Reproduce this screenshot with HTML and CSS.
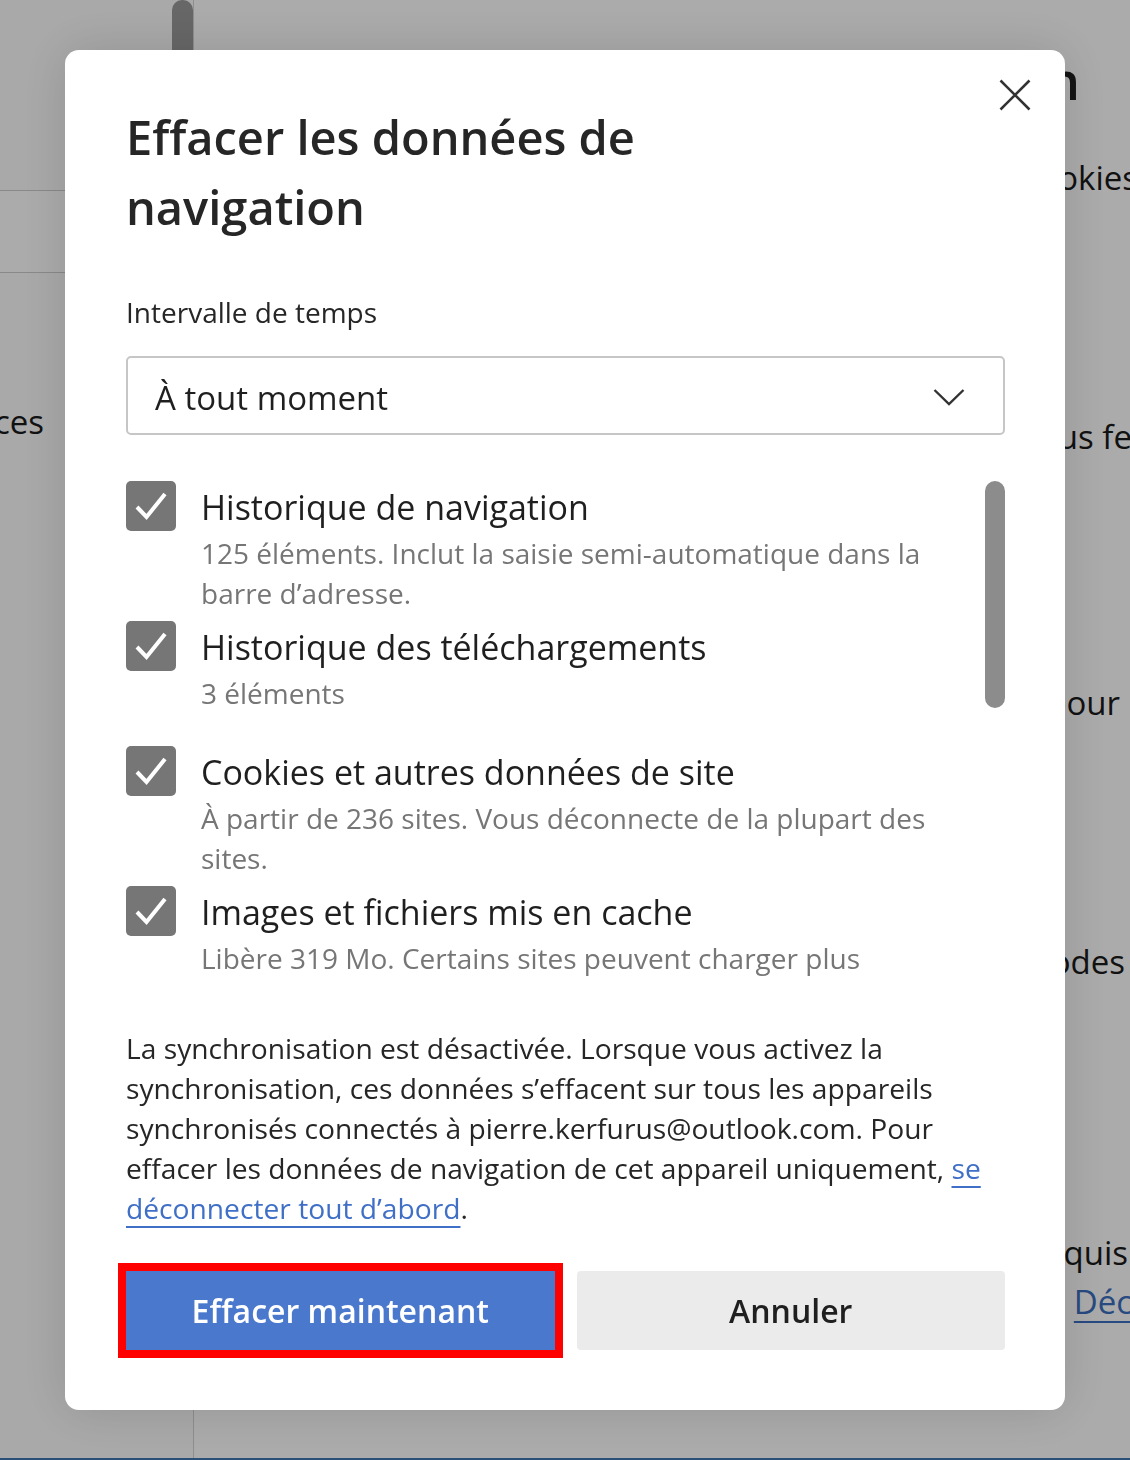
FILE: index.html
```html
<!DOCTYPE html>
<html lang="fr">
<head>
    <meta charset="UTF-8">
    <meta name="viewport" content="width=device-width, initial-scale=1.0">
    <title>Paramètres - Confidentialité</title>
    <link rel="stylesheet" href="styles.css">
</head>
<body>
    <div class="page">
        <nav class="sidenav">
            <div class="sidenav-body">
                <div class="search-box"></div>
                <div class="nav-item"><span>services</span></div>
            </div>
            <div class="sidenav-scroll">
                <div class="sidenav-thumb"></div>
            </div>
        </nav>

        <main class="settings">
            <h1 class="settings-title">Effacer les données de navigation</h1>
            <p class="settings-line line-cookies">les mots de passe, les cookies</p>
            <p class="settings-line line-close">chaque fois que vous fermez</p>
            <p class="settings-line line-ie">navigation pour</p>
            <p class="settings-line line-codes">et les codes</p>
            <p class="settings-line line-req">requis</p>
            <p class="settings-line line-link"><a href="#">Découvrir</a></p>
        </main>
    </div>

    <div class="scrim">
        <div class="dialog" role="dialog">
            <div class="dialog-header">
                <h2 class="dialog-title">Effacer les données de navigation</h2>
                <button class="close-btn" aria-label="Fermer">
                    <svg width="50" height="50" viewBox="0 0 50 50">
                        <path d="M10.5 10.5 L39.5 39.5 M39.5 10.5 L10.5 39.5" stroke="#333" stroke-width="2.6" fill="none"/>
                    </svg>
                </button>
            </div>

            <div class="field-label">Intervalle de temps</div>
            <div class="select">
                <span>À tout moment</span>
                <svg width="32" height="18" viewBox="0 0 32 18">
                    <path d="M1.5 2 L16 16 L30.5 2" stroke="#333" stroke-width="2.4" fill="none"/>
                </svg>
            </div>

            <div class="data-list">
                <div class="data-items">
                    <div class="data-item">
                        <span class="checkbox">
                            <svg width="50" height="50" viewBox="0 0 50 50"><path d="M11 26 L20.5 36 L39 13" stroke="#fff" stroke-width="4" fill="none"/></svg>
                        </span>
                        <div class="data-text">
                            <div class="data-name">Historique de navigation</div>
                            <div class="data-desc">125 éléments. Inclut la saisie semi-automatique dans la barre d’adresse.</div>
                        </div>
                    </div>
                    <div class="data-item">
                        <span class="checkbox">
                            <svg width="50" height="50" viewBox="0 0 50 50"><path d="M11 26 L20.5 36 L39 13" stroke="#fff" stroke-width="4" fill="none"/></svg>
                        </span>
                        <div class="data-text">
                            <div class="data-name">Historique des téléchargements</div>
                            <div class="data-desc">3 éléments</div>
                        </div>
                    </div>
                    <div class="data-item">
                        <span class="checkbox">
                            <svg width="50" height="50" viewBox="0 0 50 50"><path d="M11 26 L20.5 36 L39 13" stroke="#fff" stroke-width="4" fill="none"/></svg>
                        </span>
                        <div class="data-text">
                            <div class="data-name">Cookies et autres données de site</div>
                            <div class="data-desc">À partir de 236 sites. Vous déconnecte de la plupart des sites.</div>
                        </div>
                    </div>
                    <div class="data-item">
                        <span class="checkbox">
                            <svg width="50" height="50" viewBox="0 0 50 50"><path d="M11 26 L20.5 36 L39 13" stroke="#fff" stroke-width="4" fill="none"/></svg>
                        </span>
                        <div class="data-text">
                            <div class="data-name">Images et fichiers mis en cache</div>
                            <div class="data-desc">Libère 319 Mo. Certains sites peuvent charger plus lentement lors de votre prochaine visite.</div>
                        </div>
                    </div>
                    <div class="data-item">
                        <span class="checkbox unchecked"></span>
                        <div class="data-text">
                            <div class="data-name">Mots de passe</div>
                            <div class="data-desc">Aucun</div>
                        </div>
                    </div>
                </div>
                <div class="list-scroll">
                    <div class="list-thumb"></div>
                </div>
            </div>

            <p class="sync-note">La synchronisation est désactivée. Lorsque vous activez la synchronisation, ces données s’effacent sur tous les appareils synchronisés connectés à pierre.kerfurus@outlook.com. Pour effacer les données de navigation de cet appareil uniquement, <a href="#">se déconnecter tout d’abord</a>.</p>

            <div class="dialog-actions">
                <button class="btn btn-primary">Effacer maintenant</button>
                <button class="btn btn-secondary">Annuler</button>
            </div>
        </div>
    </div>
</body>
</html>
```

FILE: styles.css
```css
* {
    box-sizing: border-box;
}

html, body {
    margin: 0;
    height: 100%;
}

body {
    font-family: 'Open Sans', 'Noto Sans', sans-serif;
    color: #1f1f1f;
    background: #fff;
    overflow: hidden;
}

/* settings page behind the dialog */
.page {
    display: flex;
    height: 100vh;
    border-bottom: 2px solid #3f78b6;
}

.sidenav {
    width: 194px;
    flex-shrink: 0;
    display: flex;
    background: #fcfcfc;
    border-right: 1px solid #d4d4d4;
}

.sidenav-body {
    flex: 1;
    min-width: 0;
}

.search-box {
    margin-top: 190px;
    height: 83px;
    background: #fff;
    border-top: 1px solid #cdcdcd;
    border-bottom: 1px solid #cdcdcd;
}

.nav-item {
    margin-top: 129px;
    padding-right: 128px;
    display: flex;
    justify-content: flex-end;
    font-size: 33px;
    line-height: 40px;
    white-space: nowrap;
    color: #1a1a1a;
}

.sidenav-scroll {
    width: 21px;
    flex-shrink: 0;
}

.sidenav-thumb {
    height: 70px;
    background: #9a9a9a;
    border-radius: 10px 10px 0 0;
}

.settings {
    flex: 1;
    min-width: 0;
}

.settings-title {
    margin: 45px 50px 0 0;
    font-size: 52px;
    line-height: 70px;
    font-weight: 600;
    text-align: right;
    white-space: nowrap;
}

.settings-line {
    margin: 0;
    font-size: 33px;
    line-height: 40px;
    text-align: right;
    white-space: nowrap;
    color: #1a1a1a;
}

.line-cookies {
    margin-top: 43px;
    margin-right: -8px;
}

.line-close {
    margin-top: 219px;
    margin-right: -80px;
}

.line-ie {
    margin-top: 226px;
    margin-right: 10px;
}

.line-codes {
    margin-top: 219px;
    margin-right: 5px;
}

.line-req {
    margin-top: 251px;
    margin-right: 2px;
}

.line-link {
    margin-top: 9px;
    margin-right: -94px;
}

.line-link a {
    color: #3b6fc0;
    text-decoration-thickness: 2px;
    text-underline-offset: 7px;
}

/* modal */
.scrim {
    position: fixed;
    inset: 0;
    background: rgba(0, 0, 0, 0.33);
    display: flex;
    align-items: flex-start;
}

.dialog {
    width: 1000px;
    margin: 50px 0 0 65px;
    padding: 52px 60px 60px 61px;
    background: #fff;
    border-radius: 14px;
    box-shadow: 0 0 50px rgba(0, 0, 0, 0.14);
}

.dialog-header {
    display: flex;
    justify-content: space-between;
    align-items: flex-start;
}

.dialog-title {
    margin: 0;
    max-width: 560px;
    font-size: 47px;
    line-height: 70px;
    font-weight: 600;
    color: #262626;
}

.close-btn {
    width: 50px;
    height: 50px;
    margin: -32px -35px 0 0;
    padding: 0;
    border: none;
    background: none;
    cursor: pointer;
}

.close-btn svg {
    display: block;
}

.field-label {
    margin-top: 50px;
    font-size: 28px;
    line-height: 40px;
    color: #262626;
}

.select {
    margin-top: 24px;
    height: 79px;
    padding: 0 38px 0 27px;
    display: flex;
    align-items: center;
    justify-content: space-between;
    border: 2px solid #c6c6c6;
    border-radius: 5px;
    font-size: 33px;
    color: #1f1f1f;
}

.select svg {
    margin-top: 2px;
}

.select span {
    margin-top: 3px;
}

.data-list {
    margin-top: 46px;
    height: 505px;
    display: flex;
    gap: 20px;
    overflow: hidden;
}

.data-items {
    flex: 1;
}

.data-item {
    display: flex;
    gap: 25px;
    min-height: 125px;
    padding-bottom: 8px;
}

.checkbox {
    width: 50px;
    height: 50px;
    flex-shrink: 0;
    border-radius: 5px;
    background: #767676;
}

.checkbox svg {
    display: block;
}

.checkbox.unchecked {
    background: #fff;
    border: 2px solid #767676;
}

.data-text {
    flex: 1;
}

.data-name {
    font-size: 34px;
    line-height: 52px;
    color: #1f1f1f;
}

.data-desc {
    font-size: 28px;
    line-height: 40px;
    color: #767676;
}

.list-scroll {
    width: 20px;
    flex-shrink: 0;
}

.list-thumb {
    height: 227px;
    border-radius: 10px;
    background: #8c8c8c;
}

.sync-note {
    margin: 42px 0 0;
    font-size: 28.2px;
    line-height: 40px;
    color: #262626;
}

.sync-note a {
    color: #3f6fc6;
    text-decoration-thickness: 2px;
    text-underline-offset: 7px;
}

.dialog-actions {
    margin-top: 43px;
    display: grid;
    grid-template-columns: 1fr 1fr;
    gap: 22px;
}

.btn {
    height: 79px;
    border: none;
    border-radius: 4px;
    font-family: inherit;
    font-size: 32px;
    font-weight: 600;
    cursor: pointer;
}

.btn-primary {
    background: #4a78cc;
    color: #fff;
    border-radius: 0;
    outline: 8px solid #ff0000;
}

.btn-secondary {
    background: #ebebeb;
    color: #1f1f1f;
}
```
